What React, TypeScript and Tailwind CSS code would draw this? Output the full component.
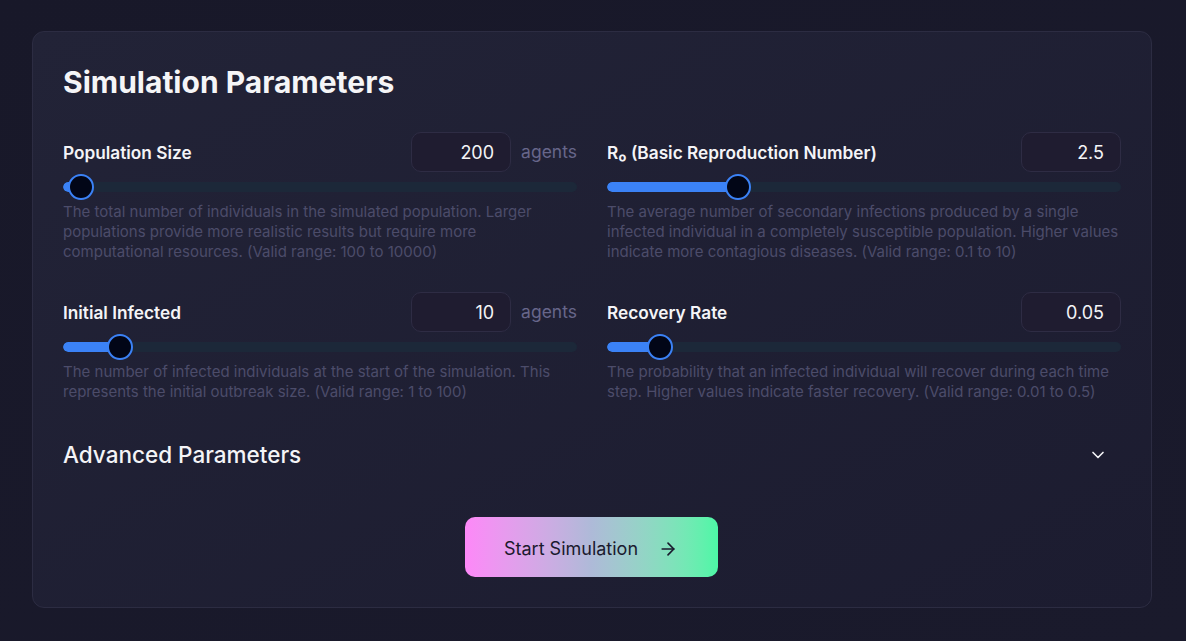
import { ChevronDown, ArrowRight } from 'lucide-react'

type Param = {
  label: string
  value: string
  unit?: string
  pct: number
  description: string
}

const PARAMS: Param[] = [
  {
    label: 'Population Size',
    value: '200',
    unit: 'agents',
    pct: (200 - 100) / (10000 - 100),
    description:
      'The total number of individuals in the simulated population. Larger populations provide more realistic results but require more computational resources. (Valid range: 100 to 10000)',
  },
  {
    label: 'R₀ (Basic Reproduction Number)',
    value: '2.5',
    pct: (2.5 - 0.1) / (10 - 0.1),
    description:
      'The average number of secondary infections produced by a single infected individual in a completely susceptible population. Higher values indicate more contagious diseases. (Valid range: 0.1 to 10)',
  },
  {
    label: 'Initial Infected',
    value: '10',
    unit: 'agents',
    pct: (10 - 1) / (100 - 1),
    description:
      'The number of infected individuals at the start of the simulation. This represents the initial outbreak size. (Valid range: 1 to 100)',
  },
  {
    label: 'Recovery Rate',
    value: '0.05',
    pct: (0.05 - 0.01) / (0.5 - 0.01),
    description:
      'The probability that an infected individual will recover during each time step. Higher values indicate faster recovery. (Valid range: 0.01 to 0.5)',
  },
]

const Slider = ({ pct }: { pct: number }) => {
  // thumb is 26px wide, travels inside the track like a native range
  const center = `calc(13px + (100% - 26px) * ${pct})`
  return (
    <div className="relative h-[30px] flex items-center">
      <div className="w-full h-2.5 rounded-full bg-[#1c2839] overflow-hidden">
        <div className="h-full bg-[#3b82f6] rounded-full" style={{ width: center }} />
      </div>
      <div
        className="absolute top-[2px] w-[26px] h-[26px] -ml-[13px] rounded-full bg-[#020617] border-2 border-[#3b82f6]"
        style={{ left: center }}
      />
    </div>
  )
}

const ParamField = ({ p }: { p: Param }) => (
  <div className="flex flex-col">
    <div className="flex items-center h-10">
      <label className="flex-1 text-[17.25px] font-semibold text-[#f4f4f7] pt-px">{p.label}</label>
      <div className="w-[100px] h-10 rounded-[10px] border border-[#2e2c44] bg-[#1f1c30] flex items-center justify-end pr-4 text-[18px] text-[#f4f4f7]">
        {p.value}
      </div>
      {p.unit && <span className="ml-2.5 text-[17.5px] text-[#67668a]">{p.unit}</span>}
    </div>
    <Slider pct={p.pct} />
    <p className="text-[15px] leading-5 text-[#4c4c6a]">{p.description}</p>
  </div>
)

export default function App() {
  return (
    <div className="min-h-[641px] bg-gradient-to-br from-[#181829] to-[#1a1a2c] pl-8 pr-[34px] pt-[31px] pb-[34px] font-[Inter,sans-serif]">
      <div className="rounded-xl border border-[#2c2c42] bg-gradient-to-br from-[#222337] to-[#1c1c30] p-[30px]">
        <h2 className="text-3xl leading-10 font-bold text-[#f5f5f7]">Simulation Parameters</h2>

        <div className="mt-[30px] grid grid-cols-2 gap-x-[30px] gap-y-[30px]">
          {PARAMS.map((p) => (
            <ParamField key={p.label} p={p} />
          ))}
        </div>

        <div className="mt-[38px] flex items-center justify-between h-[30px]">
          <h3 className="text-[22.5px] font-medium text-[#f4f4f7]">Advanced Parameters</h3>
          <ChevronDown size={20} strokeWidth={2} className="mr-[13px] text-[#f4f4f7]" />
        </div>

        <div className="mt-[47px] flex justify-center">
          <button className="h-[60px] w-[253px] -translate-x-px rounded-[10px] bg-gradient-to-r from-[#fd88f8] via-[#aebad8] to-[#4cf7a6] flex items-center justify-center gap-[20px] pt-[3px] text-[18px] text-[#1a1a2e]">
            <span>Start Simulation</span>
            <ArrowRight size={20} strokeWidth={2} />
          </button>
        </div>
      </div>
    </div>
  )
}
